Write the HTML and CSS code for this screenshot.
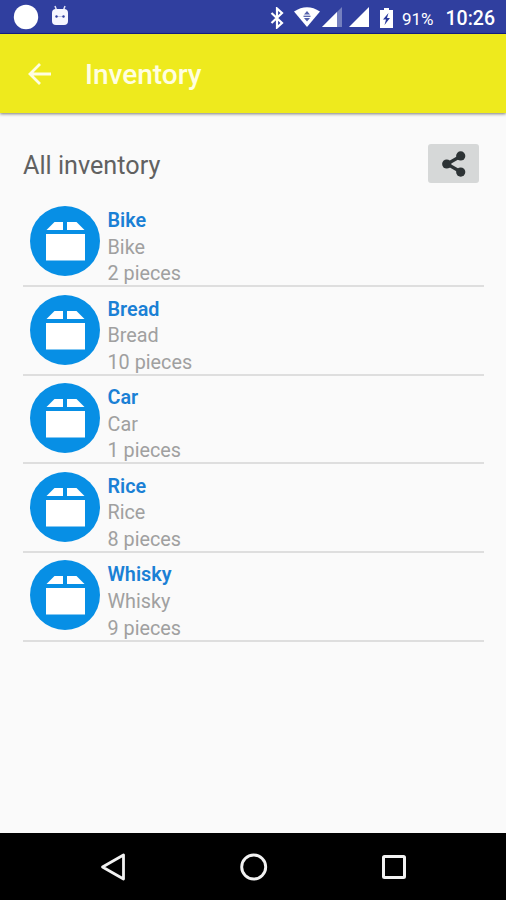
FILE: index.html
```html
<!DOCTYPE html>
<html lang="en">
<head>
<meta charset="utf-8">
<title>Inventory</title>
<link rel="stylesheet" href="styles.css">
</head>
<body>
<svg class="defs" width="0" height="0" aria-hidden="true">
  <symbol id="box" viewBox="0 0 70 70">
    <circle cx="35" cy="35" r="35" fill="#078fe5"/>
    <path fill="#fff" d="M16 28h39v26.500H16zM24.500 16H33v8H16.500zM37 16h9.500l8 8H37z"/>
  </symbol>
</svg>
<div class="screen">
  <header class="status">
    <svg class="dot" width="26" height="26" viewBox="0 0 26 26"><circle cx="13" cy="13" r="12.200" fill="#fff"/></svg>
    <svg class="robot" width="18" height="21" viewBox="0 0 18 21">
      <path d="M4 1l1.500 4M14 1l-1.500 4" stroke="#dfe2f4" stroke-width="1.500"/>
      <path fill="#f5f6ff" d="M1 8q0-4 4-4h8q4 0 4 4v8q0 4-4 4H5q-4 0-4-4z"/>
      <path d="M5.500 11.500h7" stroke="#c3c8e6"/>
      <circle cx="5.500" cy="11.500" r="1.200" fill="#303f9f"/><circle cx="12.500" cy="11.500" r="1.200" fill="#303f9f"/>
    </svg>
    <svg class="bluetooth" width="14" height="22" viewBox="0 0 14 22"><path d="M1.500 6l10.500 10-5 4.500v-19l5 4.500L1.500 16" fill="none" stroke="#fff" stroke-width="2.200"/></svg>
    <svg class="wifi" width="26" height="20" viewBox="0 0 26 20">
      <path fill="#fff" d="M0 4.500Q13-4 26 4.500L13 20z"/>
      <path d="M10 7.500l3-3.500 3 3.500zM10 11l3 3.500 3-3.500z" fill="#5360aa"/><path d="M9.500 9.300h7" stroke="#5360aa" stroke-width="1.300"/>
    </svg>
    <svg class="signal" width="20" height="20" viewBox="0 0 20 20"><path fill="#7580bf" d="M20 0v20H0z"/><path fill="#fff" d="M15 5v15H0z"/></svg>
    <svg class="signal-full" width="20" height="20" viewBox="0 0 20 20"><path fill="#fff" d="M20 0v20H0z"/></svg>
    <svg class="battery" width="13" height="20" viewBox="0 0 13 20"><path fill="#fff" d="M4 0h5v2h4v18H0V2h4z"/><path fill="#28389b" d="M8.500 5L3 11.500h3L4.500 17l5.500-7H7z"/></svg>
    <span class="percent">91%</span>
    <span class="clock">10:26</span>
  </header>
  <div class="appbar">
    <svg class="back" width="24" height="22" viewBox="0 0 24 22"><path d="M12 1L2 11l10 10M2 11h21" fill="none" stroke="#fffee0" stroke-width="2.800"/></svg>
    <h1>Inventory</h1>
  </div>
  <main>
    <div class="heading">
      <h2>All inventory</h2>
      <button class="share" aria-label="Share">
        <svg width="24" height="26" viewBox="0 0 24 26"><path d="M19 5L5 13l14 8" fill="none" stroke="#2d3335" stroke-width="3.200"/><g fill="#2d3335"><circle cx="18.700" cy="4.900" r="4.600"/><circle cx="4.700" cy="13" r="4.600"/><circle cx="18.700" cy="21.100" r="4.600"/></g></svg>
      </button>
    </div>
    <ul class="list">
      <li><svg class="icon"><use href="#box"/></svg><div><h3>Bike</h3><p>Bike</p><p>2 pieces</p></div></li>
      <li><svg class="icon"><use href="#box"/></svg><div><h3>Bread</h3><p>Bread</p><p>10 pieces</p></div></li>
      <li><svg class="icon"><use href="#box"/></svg><div><h3>Car</h3><p>Car</p><p>1 pieces</p></div></li>
      <li><svg class="icon"><use href="#box"/></svg><div><h3>Rice</h3><p>Rice</p><p>8 pieces</p></div></li>
      <li><svg class="icon"><use href="#box"/></svg><div><h3>Whisky</h3><p>Whisky</p><p>9 pieces</p></div></li>
    </ul>
  </main>
  <nav class="navbar">
    <svg width="28" height="30" viewBox="0 0 28 30"><path d="M3.500 15L24.500 3v24z" fill="none" stroke="#f2f2f2" stroke-width="2.800" stroke-linejoin="round"/></svg>
    <svg width="28" height="30" viewBox="0 0 28 30"><circle cx="13.700" cy="15" r="12" fill="none" stroke="#f2f2f2" stroke-width="2.900"/></svg>
    <svg width="28" height="30" viewBox="0 0 28 30"><rect x="3.500" y="4.500" width="21" height="21" rx="1" fill="none" stroke="#f2f2f2" stroke-width="3"/></svg>
  </nav>
</div>
</body>
</html>
```

FILE: styles.css
```css
* { box-sizing: border-box; margin: 0; padding: 0; }
body { font-family: Roboto, "Liberation Sans", sans-serif; background: #fafafa; }
.defs { display: block; }
.screen { width: 506px; height: 900px; display: flex; flex-direction: column; overflow: hidden; }
svg { flex: none; }
.status { height: 34px; flex: none; display: flex; align-items: center; padding: 0 11px 0 13px; background: #303f9f; border-bottom: 1px solid #15208b; color: #fff; }
.robot { margin-left: 12px; margin-top: -2px; }
.bluetooth { margin-left: 201px; margin-top: 2px; }
.wifi { margin-left: 10px; }
.signal { margin-left: 2px; }
.signal-full { margin-left: 7px; }
.battery { margin-left: 11px; margin-top: 2px; }
.percent { margin-left: 9px; font-size: 17px; line-height: 34px; margin-top: 4px; }
.clock { margin-left: auto; font-size: 19.500px; font-weight: 500; line-height: 34px; margin-top: 5px; }
.appbar { height: 79px; flex: none; display: flex; align-items: center; padding: 0 0 0 28px; background: #eeea1d; box-shadow: 0 1px 3px rgba(0, 0, 0, .5); }
h1 { margin-left: 33px; color: #fffee0; font-size: 28px; font-weight: 500; line-height: 32px; margin-top: 2px; }
main { flex: 1; padding: 31px 22px 0 23px; }
.heading { display: flex; justify-content: space-between; height: 39px; padding-right: 5px; }
h2 { color: #616161; font-size: 25.200px; font-weight: 400; line-height: 43px; }
.share { width: 51px; height: 39px; border: 0; border-radius: 3px; background: #d6d8d8; display: flex; align-items: center; justify-content: center; }
.list { list-style: none; padding-top: 15.700px; }
.list li { height: 88.600px; display: flex; align-items: flex-start; padding: 7.300px 0 0 7px; border-bottom: 2px solid #dedede; }
.icon { width: 70px; height: 70px; margin-right: 7.500px; }
.list div { padding-top: 2px; }
h3, p { font-size: 19.800px; line-height: 26.600px; }
h3 { color: #1a80d5; font-weight: 600; }
p { color: #a0a0a0; font-weight: 400; }
.navbar { height: 67px; flex: none; display: flex; justify-content: space-between; align-items: center; padding: 0 98px 0 99px; background: #000; }
```
